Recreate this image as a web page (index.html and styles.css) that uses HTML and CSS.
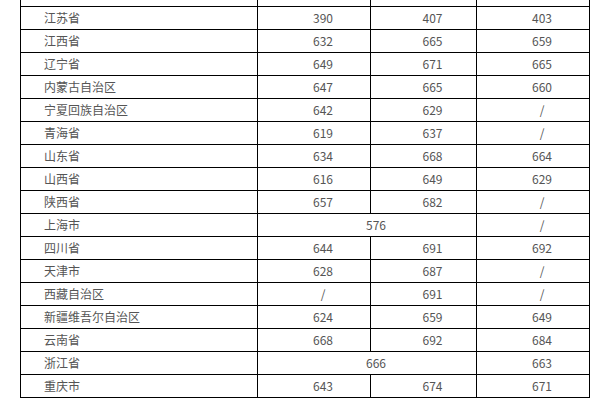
FILE: index.html
```html
<!DOCTYPE html>
<html lang="zh-CN">
<head>
<meta charset="utf-8">
<link rel="stylesheet" href="styles.css">
</head>
<body>
<table class="score">
<colgroup><col class="c1"><col class="c2"><col class="c3"><col class="c4"></colgroup>
<tbody>
<tr class="prev"><td></td><td></td><td></td><td></td></tr>
<tr><td class="name">江苏省</td><td class="num">390</td><td class="num">407</td><td class="num">403</td></tr>
<tr><td class="name">江西省</td><td class="num">632</td><td class="num">665</td><td class="num">659</td></tr>
<tr><td class="name">辽宁省</td><td class="num">649</td><td class="num">671</td><td class="num">665</td></tr>
<tr><td class="name">内蒙古自治区</td><td class="num">647</td><td class="num">665</td><td class="num">660</td></tr>
<tr><td class="name">宁夏回族自治区</td><td class="num">642</td><td class="num">629</td><td class="num">/</td></tr>
<tr><td class="name">青海省</td><td class="num">619</td><td class="num">637</td><td class="num">/</td></tr>
<tr><td class="name">山东省</td><td class="num">634</td><td class="num">668</td><td class="num">664</td></tr>
<tr><td class="name">山西省</td><td class="num">616</td><td class="num">649</td><td class="num">629</td></tr>
<tr><td class="name">陕西省</td><td class="num">657</td><td class="num">682</td><td class="num">/</td></tr>
<tr><td class="name">上海市</td><td class="num" colspan="2">576</td><td class="num">/</td></tr>
<tr><td class="name">四川省</td><td class="num">644</td><td class="num">691</td><td class="num">692</td></tr>
<tr><td class="name">天津市</td><td class="num">628</td><td class="num">687</td><td class="num">/</td></tr>
<tr><td class="name">西藏自治区</td><td class="num">/</td><td class="num">691</td><td class="num">/</td></tr>
<tr><td class="name">新疆维吾尔自治区</td><td class="num">624</td><td class="num">659</td><td class="num">649</td></tr>
<tr><td class="name">云南省</td><td class="num">668</td><td class="num">692</td><td class="num">684</td></tr>
<tr><td class="name">浙江省</td><td class="num" colspan="2">666</td><td class="num">663</td></tr>
<tr><td class="name">重庆市</td><td class="num">643</td><td class="num">674</td><td class="num">671</td></tr>
</tbody>
</table>
</body>
</html>
```
FILE: styles.css
```css
html, body {
  margin: 0;
  padding: 0;
  background: #fff;
}
body {
  font-family: "Noto Sans CJK SC", "Noto Sans", sans-serif;
  font-size: 12px;
  color: #555;
}
.score {
  margin-top: -17px;
  margin-left: 20px;
  width: 569px;
  table-layout: fixed;
  border-collapse: collapse;
}
.c1 { width: 237px; }
.c2 { width: 113px; }
.c3 { width: 106px; }
.c4 { width: 113px; }
.score td {
  border: 1px solid #000;
  height: 22px;
  padding: 0;
  line-height: 16px;
  vertical-align: middle;
}
.score td.name {
  padding-left: 23px;
  text-align: left;
}
.score td.num {
  padding-left: 18px;
  text-align: center;
}
```
